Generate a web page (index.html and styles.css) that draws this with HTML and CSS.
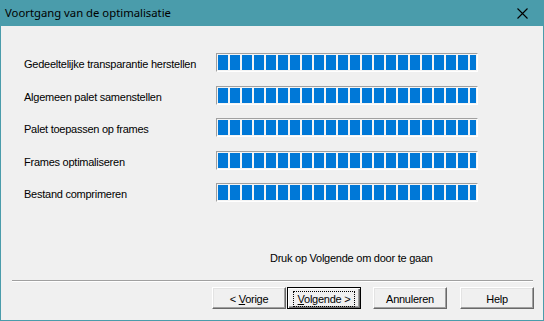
FILE: index.html
```html
<!DOCTYPE html>
<html>
<head>
<meta charset="utf-8">
<link rel="stylesheet" href="styles.css">
</head>
<body>
<div class="window">
  <div class="titlebar">
    <span class="title">Voortgang van de optimalisatie</span>
    <svg class="close" width="11" height="11" viewBox="0 0 11 11"><path d="M0.5 0.5 L10.5 10.5 M10.5 0.5 L0.5 10.5" stroke="#000" stroke-width="1.1" fill="none"/></svg>
  </div>
  <div class="content">
    <div class="rows">
      <div class="label">Gedeeltelijke transparantie herstellen</div>
      <div class="bar"><div class="fill"></div></div>
      <div class="label">Algemeen palet samenstellen</div>
      <div class="bar"><div class="fill"></div></div>
      <div class="label">Palet toepassen op frames</div>
      <div class="bar"><div class="fill"></div></div>
      <div class="label">Frames optimaliseren</div>
      <div class="bar"><div class="fill"></div></div>
      <div class="label">Bestand comprimeren</div>
      <div class="bar"><div class="fill"></div></div>
    </div>
    <div class="hint">Druk op Volgende om door te gaan</div>
    <div class="sep"></div>
    <div class="buttons">
      <div class="btn b1"><span>&lt; <u>V</u>orige</span></div>
      <div class="btn default b2"><span class="focus"><u>V</u>olgende &gt;</span></div>
      <div class="btn b3"><span>Annuleren</span></div>
      <div class="btn b4"><span>Help</span></div>
    </div>
  </div>
</div>
</body>
</html>
```
FILE: styles.css
```css
html, body {
  margin: 0;
  padding: 0;
  background: #f0f0f0;
}
.window {
  width: 544px;
  height: 321px;
  box-sizing: border-box;
  border: 1px solid #4a9cab;
  border-top: none;
  display: flex;
  flex-direction: column;
  background: #f0f0f0;
}
.titlebar {
  height: 26px;
  background: #4a9cab;
  display: flex;
  align-items: center;
  justify-content: space-between;
  margin: 0 -1px;
  padding: 0 0 0 5px;
}
.title {
  font-family: "Noto Sans", "Open Sans", sans-serif;
  font-size: 11.3px;
  color: #000;
  position: relative;
  top: -1px;
}
.close {
  margin-right: 16px;
}
.content {
  flex: 1;
  display: flex;
  flex-direction: column;
  font-family: "Liberation Sans", Arial, sans-serif;
  font-size: 11px;
  letter-spacing: -0.25px;
  color: #000;
}
.rows {
  display: grid;
  grid-template-columns: 192px 262px;
  grid-auto-rows: 19px;
  row-gap: 13.5px;
  margin: 27px 0 0 23px;
}
.label {
  display: flex;
  align-items: center;
  padding-top: 3px;
  white-space: nowrap;
}
.bar {
  box-sizing: border-box;
  border: 1px solid;
  border-color: #a0a0a0 #ffffff #ffffff #a0a0a0;
  padding: 1px;
  background: #f4f4f4;
}
.fill {
  height: 100%;
  background: repeating-linear-gradient(to right, #0078d7 0, #0078d7 10px, transparent 10px, transparent 12px);
}
.hint {
  margin: 49px 0 0 269px;
  height: 14px;
  line-height: 14px;
}
.sep {
  margin: 15px 10px 0 11px;
  border-top: 1px solid #a0a0a0;
  border-bottom: 1px solid #ffffff;
  height: 0;
}
.buttons {
  display: flex;
  margin: 5px 0 0 211px;
}
.btn {
  box-sizing: border-box;
  width: 74px;
  height: 22px;
  display: flex;
  align-items: center;
  justify-content: center;
  background: #f0f0f0;
  border: 1px solid;
  border-color: #ffffff #696969 #696969 #ffffff;
  box-shadow: inset -1px -1px 0 #a0a0a0, inset 1px 1px 0 #e3e3e3;
  padding-top: 1px;
  white-space: pre;
}
.b2 { margin-left: 1px; }
.b3 { margin-left: 12px; }
.b4 { margin-left: 13px; }
.btn.default {
  border: 1px solid #000;
  box-shadow: inset 1px 1px 0 #ffffff, inset -1px -1px 0 #696969, inset -2px -2px 0 #a0a0a0;
}
.focus {
  border: 1px dotted #000;
  padding: 1px 4px;
  line-height: 12px;
}
```
